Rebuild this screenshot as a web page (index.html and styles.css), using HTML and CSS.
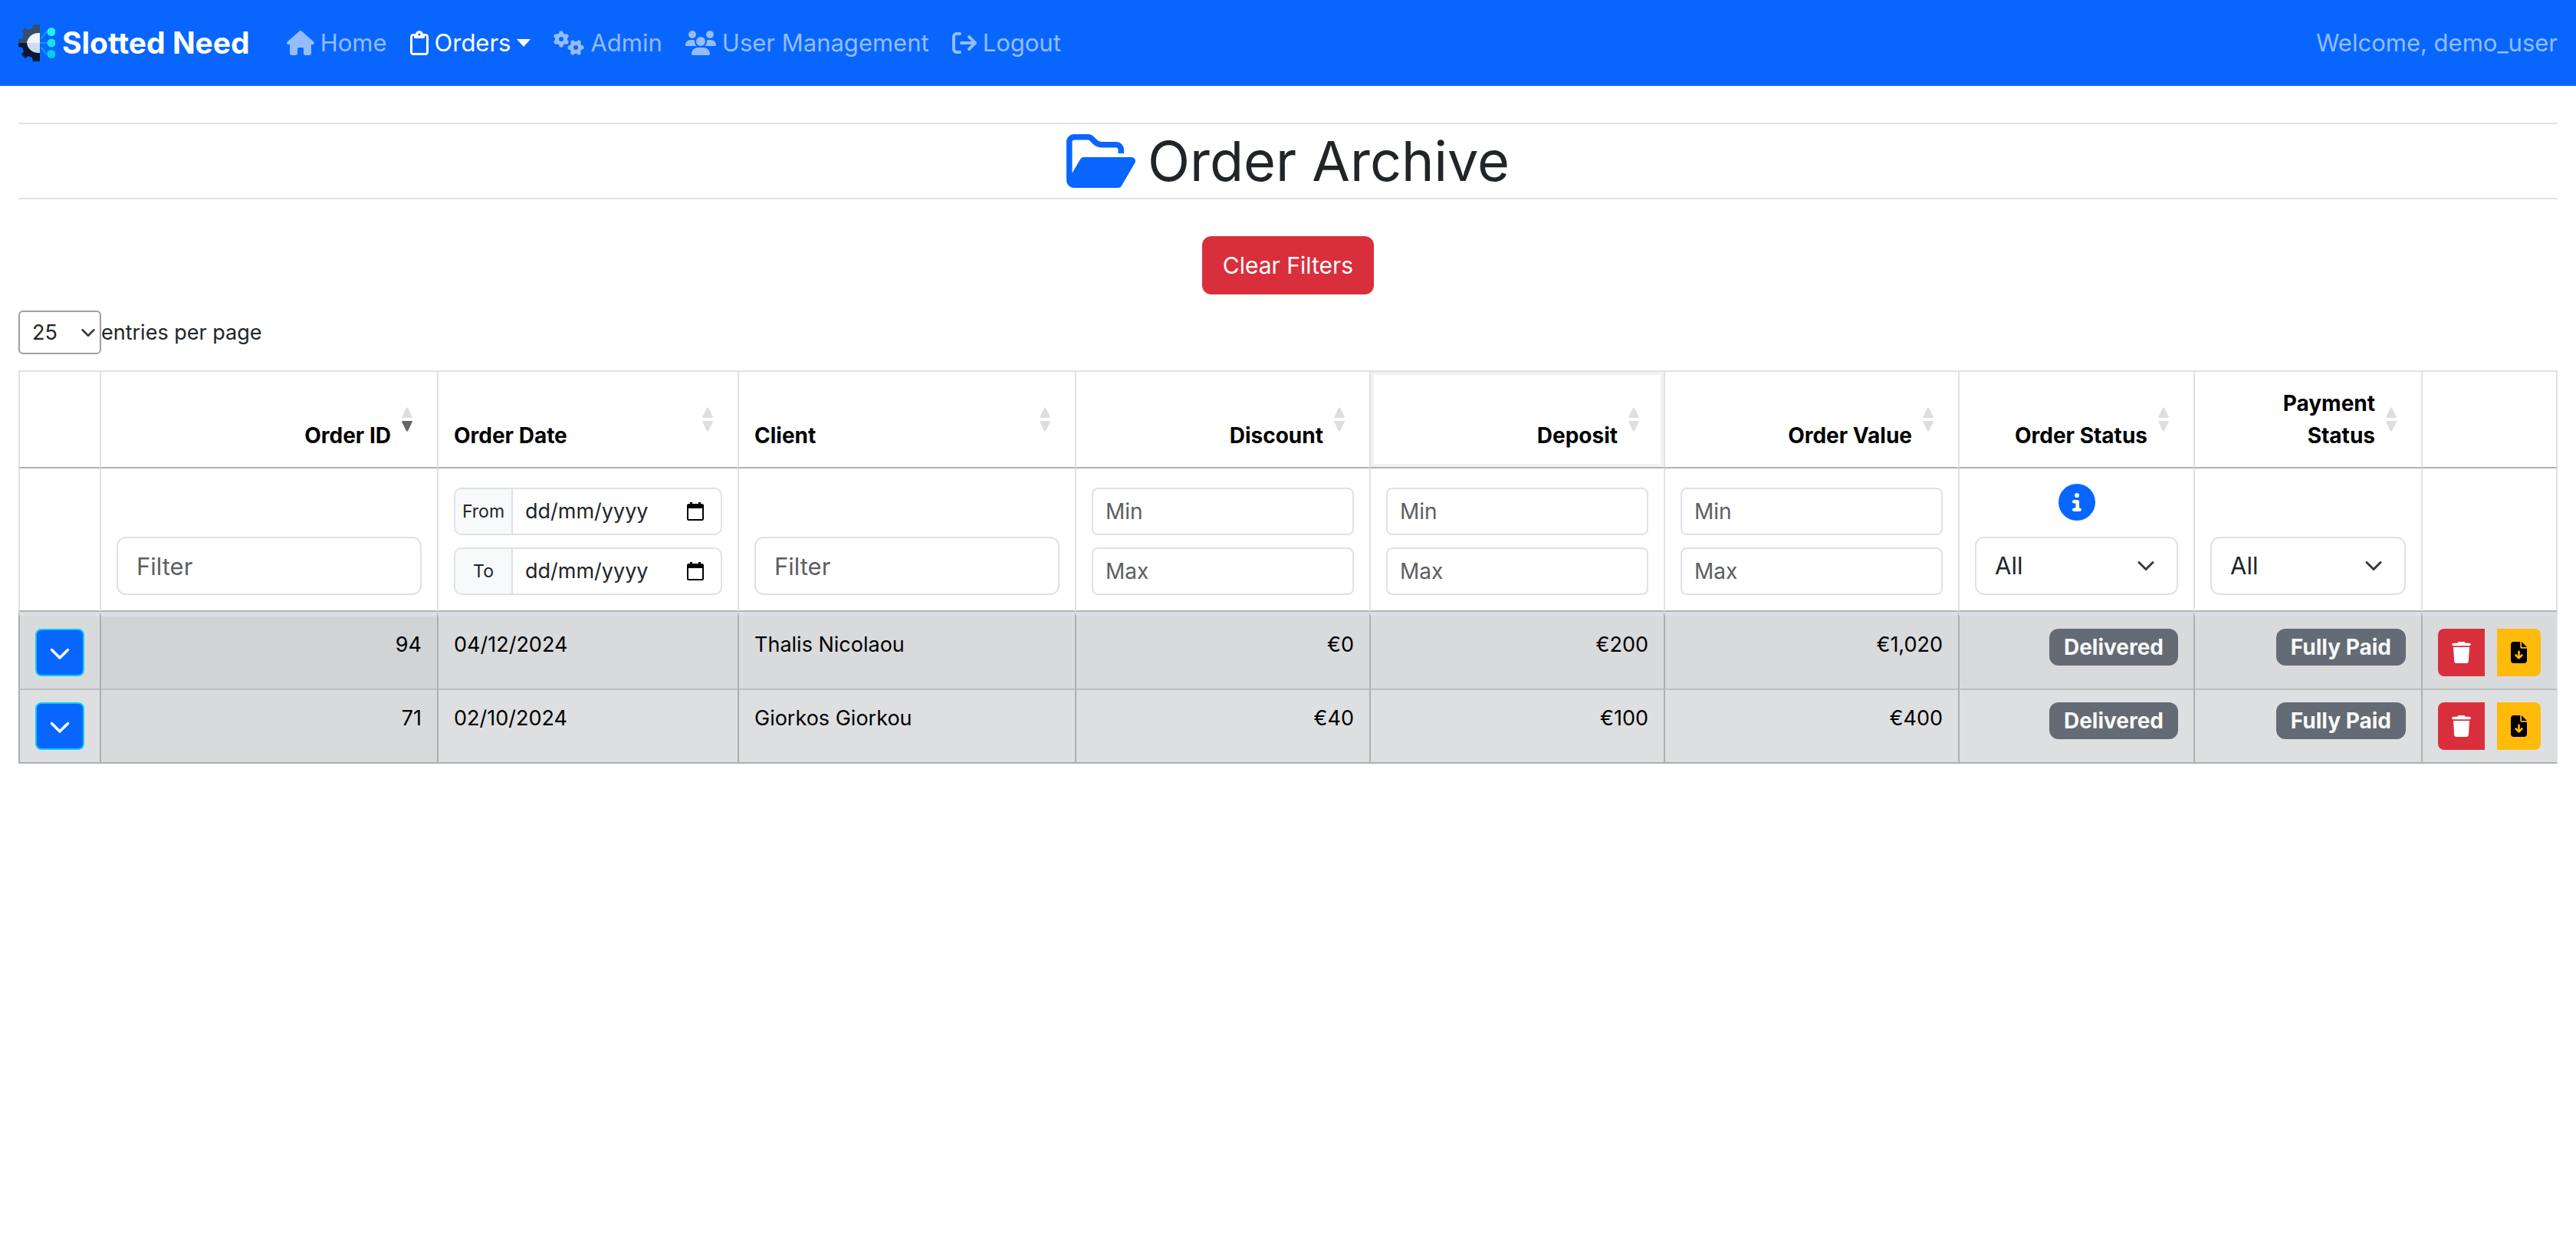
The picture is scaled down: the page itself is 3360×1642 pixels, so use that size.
FILE: index.html
```html
<!DOCTYPE html>
<html lang="en-GB">
<head>
<meta charset="utf-8">
<title>Order Archive</title>
<link rel="stylesheet" href="styles.css">
</head>
<body>
<svg class="sprite" aria-hidden="true">
  <symbol id="chevron-down" viewBox="0 0 512 512"><path d="M233.4 406.6c12.5 12.5 32.8 12.5 45.3 0l192-192c12.5-12.5 12.5-32.8 0-45.3s-32.8-12.5-45.3 0L256 338.7 86.6 169.4c-12.5-12.5-32.8-12.5-45.3 0s-12.5 32.8 0 45.3l192 192z"/></symbol>
  <symbol id="trash" viewBox="0 0 448 512"><path d="M135.2 17.7L128 32H32C14.3 32 0 46.3 0 64S14.3 96 32 96H416c17.7 0 32-14.3 32-32s-14.3-32-32-32H320l-7.2-14.3C307.4 6.8 296.3 0 284.2 0H163.8c-12.1 0-23.2 6.8-28.6 17.7zM416 128H32L53.2 467c1.6 25.3 22.6 45 47.9 45H346.9c25.3 0 46.3-19.7 47.9-45L416 128z"/></symbol>
  <symbol id="file-down" viewBox="0 0 384 512"><path d="M64 0C28.7 0 0 28.7 0 64V448c0 35.3 28.7 64 64 64H320c35.3 0 64-28.7 64-64V160H256c-17.7 0-32-14.3-32-32V0H64zM256 0V128H384L256 0zM216 232V334.1l31-31c9.4-9.4 24.6-9.4 33.9 0s9.4 24.6 0 33.9l-72 72c-9.4 9.4-24.6 9.4-33.9 0l-72-72c-9.4-9.4-9.4-24.6 0-33.9s24.6-9.4 33.9 0l31 31V232c0-13.3 10.7-24 24-24s24 10.7 24 24z"/></symbol>
  <symbol id="calendar" viewBox="0 0 22 24"><path fill-rule="evenodd" d="M4 0h3v2h8V0h3v2h1.500q2.500 0 2.500 2.500v17q0 2.500-2.500 2.500h-17Q0 24 0 21.500v-17Q0 2 2.500 2H4zM2 8v13.500q0 .5.5.5h17q.5 0 .5-.5V8z"/></symbol>
  <symbol id="sort" viewBox="0 0 14 32"><path class="up" d="M6 1q1-1.500 2 0l5.700 11.500q.6 1.500-1 1.500H1.300q-1.600 0-1-1.500z"/><path class="down" d="M6 31q1 1.500 2 0l5.700-11.500q.6-1.500-1-1.500H1.300q-1.600 0-1 1.500z"/></symbol>
</svg>

<nav class="navbar">
  <a class="brand" href="#">
    <svg class="logo" viewBox="0 0 48 48" aria-hidden="true">
      <path fill="#34506c" d="M0 24v-5l5-1q1-3 2-5l-3-4 5-5 4 3q3-2 5-2l1-5h9v24z"/>
      <path fill="#0d1733" d="M0 24v5l5 1q1 3 2 5l-3 4 5 5 4-3q3 2 5 2l1 5h9V24z"/>
      <path fill="#eef4fb" d="M28 11c-9-1-16 5-17 13h17z"/>
      <path fill="#cddcf0" d="M28 37c-9 1-16-5-17-13h17z"/>
      <path fill="none" stroke="#0b9ff0" stroke-width="2" d="M28 24h12M29 18c4-1 4-8 10-9M29 30c4 1 4 8 10 9"/>
      <circle cx="43" cy="9.500" r="5.500" fill="#1df5ee"/><circle cx="43" cy="24" r="5.500" fill="#14e4ea"/><circle cx="43" cy="38.500" r="5.500" fill="#08cce2"/>
    </svg>
    Slotted Need
  </a>
  <ul class="nav-list">
    <li><a class="nav-link" href="#"><svg width="36" height="32" viewBox="0 0 576 512" aria-hidden="true"><path d="M575.8 255.5c0 18-15 32.1-32 32.1h-32l.7 160.2c0 2.700-.2 5.400-.5 8.100V472c0 22.100-17.900 40-40 40H456c-1.100 0-2.200 0-3.300-.1c-1.400 .1-2.800 .1-4.200 .1H416 392c-22.100 0-40-17.900-40-40V448 384c0-17.700-14.300-32-32-32H256c-17.700 0-32 14.300-32 32v64 24c0 22.100-17.900 40-40 40H160 128.100c-1.500 0-3-.1-4.500-.2c-1.200 .1-2.400 .2-3.600 .2H104c-22.100 0-40-17.900-40-40V360c0-.9 0-1.900 .1-2.800V287.600H32c-18 0-32-14-32-32.100c0-9 3-17 10-24L266.400 8c7-7 15-8 22-8s15 2 21 7L564.800 231.500c8 7 12 15 11 24z"/></svg>Home</a></li>
    <li><a class="nav-link active" href="#"><svg width="24" height="32" viewBox="0 0 384 512" aria-hidden="true"><path d="M280 64h40c35.300 0 64 28.700 64 64V448c0 35.300-28.700 64-64 64H64c-35.300 0-64-28.700-64-64V128C0 92.700 28.700 64 64 64h40 9.600C121 27.500 153.300 0 192 0s71 27.500 78.400 64H280zM64 112c-8.800 0-16 7.200-16 16V448c0 8.800 7.200 16 16 16H320c8.800 0 16-7.200 16-16V128c0-8.800-7.200-16-16-16H304v24c0 13.300-10.700 24-24 24H192 104c-13.300 0-24-10.700-24-24V112H64zm128-8a24 24 0 1 0 0-48 24 24 0 1 0 0 48z"/></svg>Orders<span class="caret"></span></a></li>
    <li><a class="nav-link" href="#"><svg width="40" height="32" viewBox="0 0 640 512" aria-hidden="true"><path d="M308.5 135.3c7.1-6.3 9.9-16.2 6.2-25c-2.3-5.3-4.8-10.5-7.6-15.5L304 89.4c-3-5-6.3-9.9-9.8-14.6c-5.7-7.6-15.7-10.1-24.7-7.1l-28.2 9.3c-10.7-8.8-23-16-36.2-20.9L199 27.1c-1.9-9.3-9.1-16.7-18.5-17.8C173.9 8.4 167.2 8 160.4 8h-.7c-6.8 0-13.5 .4-20.1 1.2c-9.4 1.1-16.6 8.6-18.5 17.8L115 56.1c-13.3 5-25.5 12.1-36.2 20.9L50.500 67.8c-9-3-19-.5-24.7 7.1c-3.5 4.7-6.8 9.6-9.9 14.6l-3 5.3c-2.8 5-5.3 10.2-7.6 15.6c-3.7 8.7-.9 18.6 6.2 25l22.2 19.8C32.6 161.9 32 168.9 32 176s.6 14.1 1.7 20.9L11.5 216.7c-7.1 6.3-9.9 16.2-6.2 25c2.3 5.3 4.8 10.5 7.6 15.6l3 5.2c3 5.1 6.3 9.9 9.9 14.6c5.7 7.6 15.7 10.1 24.7 7.1l28.2-9.3c10.7 8.8 23 16 36.2 20.9l6.1 29.1c1.9 9.3 9.1 16.7 18.5 17.8c6.7 .8 13.5 1.2 20.4 1.2s13.7-.4 20.4-1.2c9.4-1.1 16.6-8.6 18.5-17.8l6.1-29.1c13.3-5 25.5-12.1 36.2-20.9l28.2 9.3c9 3 19 .5 24.7-7.1c3.5-4.7 6.8-9.5 9.8-14.6l3.1-5.4c2.8-5 5.3-10.2 7.6-15.5c3.7-8.7 .9-18.6-6.2-25l-22.2-19.8c1.1-6.8 1.7-13.8 1.7-20.9s-.6-14.1-1.7-20.9l22.2-19.8zM112 176a48 48 0 1 1 96 0 48 48 0 1 1 -96 0zM504.7 500.5c6.3 7.1 16.2 9.9 25 6.2c5.3-2.3 10.5-4.8 15.5-7.6l5.4-3.1c5-3 9.9-6.3 14.6-9.8c7.6-5.7 10.1-15.7 7.1-24.7l-9.3-28.2c8.8-10.7 16-23 20.9-36.2l29.1-6.1c9.3-1.9 16.7-9.1 17.8-18.5c.8-6.7 1.2-13.5 1.2-20.4s-.4-13.7-1.2-20.4c-1.1-9.4-8.6-16.6-17.8-18.5L583.9 307c-5-13.3-12.1-25.5-20.9-36.2l9.3-28.2c3-9 .5-19-7.1-24.7c-4.7-3.5-9.6-6.8-14.6-9.900l-5.3-3c-5-2.8-10.2-5.3-15.600-7.600c-8.700-3.700-18.600-.9-25 6.200l-19.800 22.200c-6.800-1.100-13.800-1.700-20.900-1.700s-14.100 .6-20.900 1.700l-19.800-22.200c-6.300-7.100-16.200-9.900-25-6.200c-5.300 2.300-10.500 4.800-15.600 7.600l-5.200 3c-5.100 3-9.900 6.300-14.600 9.900c-7.600 5.700-10.100 15.700-7.100 24.700l9.300 28.200c-8.800 10.700-16 23-20.900 36.200L315.100 313c-9.300 1.900-16.700 9.100-17.800 18.500c-.8 6.700-1.200 13.500-1.200 20.400s.4 13.700 1.200 20.400c1.100 9.400 8.600 16.600 17.800 18.500l29.100 6.100c5 13.300 12.100 25.500 20.900 36.200l-9.300 28.200c-3 9-.5 19 7.100 24.700c4.700 3.500 9.500 6.800 14.600 9.800l5.400 3.100c5 2.800 10.200 5.300 15.500 7.600c8.700 3.700 18.600 .9 25-6.200l19.800-22.200c6.800 1.100 13.800 1.700 20.900 1.700s14.100-.6 20.900-1.700l19.800 22.200zM464 304a48 48 0 1 1 0 96 48 48 0 1 1 0-96z"/></svg>Admin</a></li>
    <li><a class="nav-link" href="#"><svg width="40" height="32" viewBox="0 0 640 512" aria-hidden="true"><path d="M144 0a80 80 0 1 1 0 160A80 80 0 1 1 144 0zM512 0a80 80 0 1 1 0 160A80 80 0 1 1 512 0zM0 298.7C0 239.8 47.8 192 106.700 192h42.700c15.900 0 31 3.500 44.600 9.700c-1.300 7.200-1.900 14.700-1.900 22.300c0 38.200 16.800 72.500 43.300 96c-.2 0-.4 0-.7 0H21.300C9.600 320 0 310.400 0 298.700zM405.300 320c-.2 0-.4 0-.7 0c26.600-23.500 43.300-57.800 43.300-96c0-7.600-.7-15-1.900-22.300c13.600-6.300 28.700-9.700 44.600-9.700h42.700C592.200 192 640 239.800 640 298.700c0 11.800-9.600 21.300-21.300 21.300H405.300zM224 224a96 96 0 1 1 192 0 96 96 0 1 1 -192 0zM128 485.300C128 411.700 187.700 352 261.300 352H378.700C452.300 352 512 411.700 512 485.300c0 14.700-11.900 26.700-26.700 26.700H154.700c-14.700 0-26.700-11.900-26.700-26.700z"/></svg>User Management</a></li>
    <li><a class="nav-link" href="#"><svg width="32" height="32" viewBox="0 0 512 512" aria-hidden="true"><path d="M502.6 278.6c12.5-12.5 12.5-32.8 0-45.3l-128-128c-12.5-12.5-32.8-12.5-45.3 0s-12.5 32.8 0 45.3L402.7 224 192 224c-17.7 0-32 14.3-32 32s14.3 32 32 32l210.7 0-73.400 73.400c-12.500 12.500-12.500 32.800 0 45.300s32.800 12.500 45.300 0l128-128zM160 96c17.700 0 32-14.300 32-32s-14.300-32-32-32L96 32C43 32 0 75 0 128L0 384c0 53 43 96 96 96l64 0c17.700 0 32-14.300 32-32s-14.300-32-32-32l-64 0c-17.700 0-32-14.300-32-32l0-256c0-17.700 14.300-32 32-32l64 0z"/></svg>Logout</a></li>
  </ul>
  <span class="welcome">Welcome, demo_user</span>
</nav>

<main class="page">
  <h1 class="title"><svg width="90" height="80" viewBox="0 0 576 512" aria-hidden="true"><path d="M384 480h48c11.400 0 21.900-6 27.600-15.900l112-192c5.800-9.900 5.800-22.100 .1-32.100S555.500 224 544 224H144c-11.400 0-21.900 6-27.600 15.900L48 357.100V96c0-8.800 7.200-16 16-16H181.500c4.200 0 8.300 1.700 11.300 4.700l26.500 26.500c21 21 49.500 32.800 79.200 32.800H416c8.800 0 16 7.200 16 16v32h48V160c0-35.300-28.700-64-64-64H298.500c-17 0-33.300-6.700-45.300-18.700L226.700 50.700c-12-12-28.300-18.700-45.300-18.700H64C28.700 32 0 60.700 0 96V416c0 35.300 28.700 64 64 64H87.700 384z"/></svg>Order Archive</h1>
  <button class="btn-clear" type="button">Clear Filters</button>

  <div class="length">
    <select class="length-select" id="page-length"><option>25</option><option>50</option></select><label for="page-length">entries per page</label>
  </div>

  <table class="orders">
    <colgroup><col class="c-toggle"><col class="c-wide"><col class="c-date"><col class="c-wide"><col class="c-money"><col class="c-money"><col class="c-money"><col class="c-status"><col class="c-payment"><col class="c-actions"></colgroup>
    <thead>
      <tr class="heads">
        <th></th>
        <th class="num desc">Order ID<svg class="sort"><use href="#sort"/></svg></th>
        <th>Order Date<svg class="sort"><use href="#sort"/></svg></th>
        <th>Client<svg class="sort"><use href="#sort"/></svg></th>
        <th class="num">Discount<svg class="sort"><use href="#sort"/></svg></th>
        <th class="num focused">Deposit<svg class="sort"><use href="#sort"/></svg></th>
        <th class="num">Order Value<svg class="sort"><use href="#sort"/></svg></th>
        <th class="num">Order Status<svg class="sort"><use href="#sort"/></svg></th>
        <th class="num">Payment Status<svg class="sort"><use href="#sort"/></svg></th>
        <th></th>
      </tr>
      <tr class="filters">
        <td></td>
        <td><input class="field" type="text" placeholder="Filter" aria-label="Filter by order ID"></td>
        <td>
          <div class="stack">
            <div class="date-group"><label for="date-from">From</label><input id="date-from" type="text" placeholder="dd/mm/yyyy"><button type="button" aria-label="Pick start date"><svg width="22" height="24"><use href="#calendar"/></svg></button></div>
            <div class="date-group"><label for="date-to">To</label><input id="date-to" type="text" placeholder="dd/mm/yyyy"><button type="button" aria-label="Pick end date"><svg width="22" height="24"><use href="#calendar"/></svg></button></div>
          </div>
        </td>
        <td><input class="field" type="text" placeholder="Filter" aria-label="Filter by client"></td>
        <td><div class="stack"><input class="field small" type="text" placeholder="Min" aria-label="Minimum discount"><input class="field small" type="text" placeholder="Max" aria-label="Maximum discount"></div></td>
        <td><div class="stack"><input class="field small" type="text" placeholder="Min" aria-label="Minimum deposit"><input class="field small" type="text" placeholder="Max" aria-label="Maximum deposit"></div></td>
        <td><div class="stack"><input class="field small" type="text" placeholder="Min" aria-label="Minimum order value"><input class="field small" type="text" placeholder="Max" aria-label="Maximum order value"></div></td>
        <td>
          <button class="info" type="button" aria-label="About order status"><svg width="48" height="48" viewBox="0 0 512 512"><path d="M256 512A256 256 0 1 0 256 0a256 256 0 1 0 0 512zM216 336h24V272H216c-13.300 0-24-10.700-24-24s10.700-24 24-24h48c13.300 0 24 10.700 24 24v88h8c13.300 0 24 10.700 24 24s-10.700 24-24 24H216c-13.300 0-24-10.700-24-24s10.700-24 24-24zm40-208a32 32 0 1 1 0 64 32 32 0 1 1 0-64z"/></svg></button>
          <select class="field select" aria-label="Filter by order status"><option>All</option></select>
        </td>
        <td><select class="field select" aria-label="Filter by payment status"><option>All</option></select></td>
        <td></td>
      </tr>
    </thead>
    <tbody>
      <tr>
        <td><button class="btn-toggle" type="button" aria-label="Show details"><svg width="28" height="28"><use href="#chevron-down"/></svg></button></td>
        <td class="num sorted">94</td>
        <td>04/12/2024</td>
        <td>Thalis Nicolaou</td>
        <td class="num">€0</td>
        <td class="num">€200</td>
        <td class="num">€1,020</td>
        <td class="num"><span class="badge">Delivered</span></td>
        <td class="num"><span class="badge">Fully Paid</span></td>
        <td><div class="actions"><button class="btn-delete" type="button" aria-label="Delete"><svg width="25" height="28"><use href="#trash"/></svg></button><button class="btn-file" type="button" aria-label="Download"><svg width="21" height="28"><use href="#file-down"/></svg></button></div></td>
      </tr>
      <tr>
        <td><button class="btn-toggle" type="button" aria-label="Show details"><svg width="28" height="28"><use href="#chevron-down"/></svg></button></td>
        <td class="num sorted">71</td>
        <td>02/10/2024</td>
        <td>Giorkos Giorkou</td>
        <td class="num">€40</td>
        <td class="num">€100</td>
        <td class="num">€400</td>
        <td class="num"><span class="badge">Delivered</span></td>
        <td class="num"><span class="badge">Fully Paid</span></td>
        <td><div class="actions"><button class="btn-delete" type="button" aria-label="Delete"><svg width="25" height="28"><use href="#trash"/></svg></button><button class="btn-file" type="button" aria-label="Download"><svg width="21" height="28"><use href="#file-down"/></svg></button></div></td>
      </tr>
    </tbody>
  </table>
</main>
</body>
</html>
```
FILE: styles.css
```css
* { box-sizing: border-box; }

body {
  margin: 0;
  background: #fff;
  color: #212529;
  font: 27px/42px Inter, "Liberation Sans", sans-serif;
}

button, input, select {
  margin: 0;
  color: inherit;
  font: inherit;
}

svg { flex: none; fill: currentColor; }
.sprite { display: none; }

/* Navigation bar */
.navbar {
  display: flex;
  align-items: center;
  height: 112px;
  padding: 0 24px;
  background: #0866ff;
  font-size: 31px;
}

.brand {
  display: flex;
  align-items: center;
  gap: 9px;
  margin-right: 48px;
  color: #fff;
  font-size: 39px;
  font-weight: 700;
  text-decoration: none;
}

.logo { width: 48px; height: 48px; }

.nav-list {
  display: flex;
  gap: 30px;
  margin: 0;
  padding: 0;
  list-style: none;
}

.nav-link {
  display: flex;
  align-items: center;
  gap: 8px;
  color: #94bcff;
  text-decoration: none;
}

.nav-link.active { color: #fff; }

.caret {
  border-top: 10px solid;
  border-right: 9px solid transparent;
  border-left: 9px solid transparent;
}

.welcome { margin-left: auto; color: #94bcff; }

/* Heading and toolbar */
.page {
  display: flex;
  flex-direction: column;
  padding: 48px 24px;
}

.title {
  display: flex;
  align-items: center;
  justify-content: center;
  gap: 16px;
  margin: 0 0 48px;
  border: solid #dee2e6;
  border-width: 2px 0;
  font-size: 72px;
  font-weight: 400;
  line-height: 96px;
}

.title svg { color: #0866ff; }

.btn-clear {
  align-self: center;
  height: 76px;
  padding: 0 27px;
  border: 0;
  border-radius: 12px;
  background: #d92f3c;
  color: #fff;
  font-size: 30px;
}

.length {
  display: flex;
  align-items: center;
  margin: 21px 0;
}

.length-select, .select {
  appearance: none;
  background: #fff url("data:image/svg+xml,%3Csvg xmlns='http://www.w3.org/2000/svg' viewBox='0 0 16 16'%3E%3Cpath fill='none' stroke='%23343a40' stroke-linecap='round' stroke-linejoin='round' stroke-width='2' d='m2 5 6 6 6-6'/%3E%3C/svg%3E") no-repeat right 26px center / 28px 24px;
}

.length-select {
  width: 108px;
  height: 57px;
  padding: 0 16px;
  border: 2px solid #9e9e9e;
  border-radius: 6px;
  background-position: right 5px center;
  background-size: 20px 20px;
}

/* Orders table */
.orders {
  width: 100%;
  border-spacing: 0;
  border-top: 2px solid #dee2e6;
  color: #000;
  table-layout: fixed;
}

.c-toggle { width: 106px; }
.c-wide { width: 440px; }
.c-date { width: 392px; }
.c-money { width: 384px; }
.c-status { width: 307px; }
.c-payment { width: 297px; }
.c-actions { width: 178px; }

.orders th, .orders td { border-left: 2px solid #dee2e6; text-align: left; }
.orders th:last-child, .orders td:last-child { border-right: 2px solid #dee2e6; }
.orders .num { text-align: right; }

.heads th {
  position: relative;
  padding: 20px 60px 20px 20px;
  border-bottom: 2px solid #b2b2b4;
  font-size: 28px;
  vertical-align: bottom;
}

.heads th:first-child, .heads th:last-child { padding: 0; }
.focused { box-shadow: inset 0 0 0 4px #f1f2f2; }

.sort {
  position: absolute;
  top: calc(50% - 16px);
  right: 32px;
  width: 14px;
  height: 32px;
  color: #dedede;
}

.desc .sort { --sort-up: #dedede; color: #666; }
.up { fill: var(--sort-up, currentColor); }

.filters td {
  padding: 20px;
  border-bottom: 2px solid #b2b2b4;
  color: #212529;
  vertical-align: bottom;
}

.field {
  display: block;
  width: 100%;
  height: 76px;
  padding: 0 24px;
  border: 2px solid #dee2e6;
  border-radius: 12px;
  background-color: #fff;
  font-size: 31px;
}

.field.small {
  height: 62px;
  padding: 0 16px;
  border-radius: 8px;
  font-size: 28px;
}

.field::placeholder { color: #5c5f62; opacity: 1; }

.stack { display: grid; gap: 16px; }

.date-group {
  display: flex;
  height: 62px;
  border: 2px solid #dee2e6;
  border-radius: 10px;
  overflow: hidden;
}

.date-group label {
  display: flex;
  flex: none;
  align-items: center;
  justify-content: center;
  width: 75px;
  border-right: 2px solid #dee2e6;
  background: #f8f9fa;
  font-size: 23px;
}

.date-group input {
  flex: 1;
  min-width: 0;
  padding: 0 0 0 16px;
  border: 0;
}

.date-group input::placeholder { color: #212529; opacity: 1; }

.date-group button {
  display: flex;
  align-items: center;
  padding: 0 22px 0 0;
  border: 0;
  background: none;
  color: #000;
}

.info {
  display: block;
  margin: 0 auto 21px;
  padding: 0;
  border: 0;
  background: none;
  color: #0866ff;
}

.info svg { display: block; }

.orders tbody td {
  padding: 16px 20px;
  border-color: #adaeb0;
  border-bottom: 2px solid #adaeb0;
  background: #dedfe1;
  vertical-align: top;
}

.orders tbody .sorted { background: #d9dadc; }

.orders tbody tr:first-child td {
  border-top: 6px solid #d9dfe4;
  border-bottom-color: #bdbec0;
  background: #d9dadc;
}

.orders tbody tr:first-child .sorted { background: #d2d3d5; }

.btn-toggle, .btn-delete, .btn-file {
  display: flex;
  align-items: center;
  justify-content: center;
  height: 62px;
  padding: 0 18px;
  border: 0;
}

.btn-toggle {
  width: 64px;
  padding: 0;
  border: 2px solid #0dcaf0;
  border-radius: 8px;
  background: #0866ff;
  color: #fff;
}

.badge {
  display: inline-block;
  padding: 10px 19px;
  border-radius: 12px;
  background: #646b74;
  color: #f8f9fa;
  font-size: 28px;
  font-weight: 700;
  line-height: 28px;
  vertical-align: top;
}

.actions { display: flex; gap: 16px; }

.btn-delete {
  border-radius: 8px 0 0 8px;
  background: #d92f3c;
  color: #fff;
}

.btn-file {
  border-radius: 0 8px 8px 0;
  background: #ffba0a;
  color: #000;
}
```
